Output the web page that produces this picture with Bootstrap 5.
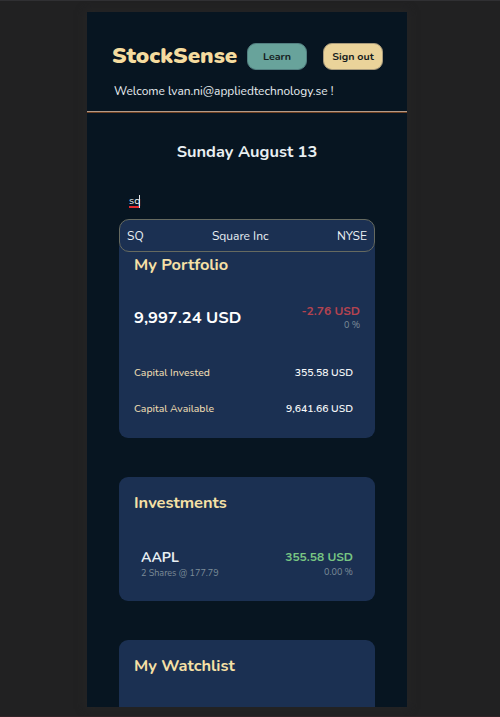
<!DOCTYPE html>
<html lang="en">
<head>
<meta charset="utf-8">
<meta name="viewport" content="width=device-width, initial-scale=1">
<title>StockSense</title>
<link rel="stylesheet" href="https://cdn.jsdelivr.net/npm/bootstrap@5.3.0/dist/css/bootstrap.min.css">
<style>
body{background:#212122;font-family:Nunito,Lato,"Open Sans",sans-serif;color:#e9eff2;height:717px;overflow:hidden;border-top:1px solid #303033;border-bottom:1px solid #302327}
.phone{width:320px;height:695px;margin:11px 0 0 87px;background:#071521;box-shadow:0 0 8px 2px #252526}
.top-bar{height:101px;background:linear-gradient(#b39a88 50%,#6e3f20 50%) bottom/100% 2px no-repeat;padding:30px 24px 0 25px}
.brand{font-size:22.4px;font-weight:900;color:#f5dc9f;line-height:28px;width:135px}
.pill,.pill:hover{width:60px;height:27px;border-radius:9px;font-size:10.7px;font-weight:700;color:#151c20;padding:0;line-height:25px;border:1px solid #505665}
.pill-learn,.pill-learn:hover{background:#68a39b;border-color:#527f80}
.pill-out,.pill-out:hover{background:#ead39a;border-color:#a89a7b}
.welcome{font-size:11.95px;line-height:20px;padding:11px 0 0 2px}
.date{font-size:16.4px;font-weight:700;line-height:24px;margin-top:27px}
.search{height:32px;margin-top:21px;padding-left:10px;font-size:10.7px;line-height:32px}
.typed{text-decoration:underline dashed #e52b2f 2px;text-underline-offset:2px;text-decoration-skip-ink:none}
.caret{width:1px;height:13px;margin-left:-1px;background:#e6e6e6}
.results{height:33px;margin-top:2px;border:1px solid #666a60;border-radius:10px;background:#1b3052;font-size:12px;line-height:32px;padding:0 7px;z-index:2}
.panel{background:#1b3052;border-radius:9px;padding:14px 15px 0}
.panel h2{font-size:16.4px;line-height:24px;font-weight:700;color:#f6e0a6;margin:0}
.first{height:199px;margin-top:-13px}
.second{height:124px;margin-top:39px}
.third{height:67px;margin-top:39px;border-radius:9px 9px 0 0}
.balance{height:30px;margin-top:25px}
.total{font-size:16.5px;font-weight:700;line-height:24px;padding-top:2px;color:#fff}
.change{font-size:12px;font-weight:700;line-height:16px}
.note{font-size:9px;line-height:12px;color:#7d8d99}
.fund{font-size:10.4px;line-height:16px}
.fund-first{margin-top:33px}
.fund-next{margin-top:20px}
.fund span:first-child{color:#ead9b0;font-weight:500}
.fund span:last-child{font-weight:600;color:#f5f7f8}
.fund,.holding{padding-right:7px}
.holding{margin-top:34px;padding-left:7px}
.ticker{font-size:14px;font-weight:700;line-height:18px}
.gain{line-height:17px}
.loss{color:#b44350}
.gain{color:#78c583}
</style>
</head>
<body>
<main class="phone overflow-hidden">
  <header class="top-bar">
    <div class="d-flex align-items-center">
      <div class="brand text-nowrap">StockSense</div>
      <button class="btn pill pill-learn">Learn</button>
      <button class="btn pill pill-out ms-3">Sign out</button>
    </div>
    <div class="welcome text-nowrap">Welcome lvan.ni@appliedtechnology.se !</div>
  </header>
  <div class="px-4 mx-2">
    <div class="date text-center">Sunday August 13</div>
    <div class="search d-flex align-items-center"><span class="typed">sq</span><i class="caret"></i></div>
    <div class="results position-relative d-flex justify-content-between"><span>SQ</span><span>Square Inc</span><span>NYSE</span></div>
    <section class="panel first">
      <h2>My Portfolio</h2>
      <div class="balance d-flex justify-content-between align-items-center">
        <div class="total">9,997.24 USD</div>
        <div class="text-end"><div class="change loss">-2.76 USD</div><div class="note">0 %</div></div>
      </div>
      <div class="fund fund-first d-flex justify-content-between"><span>Capital Invested</span><span>355.58 USD</span></div>
      <div class="fund fund-next d-flex justify-content-between"><span>Capital Available</span><span>9,641.66 USD</span></div>
    </section>
    <section class="panel second">
      <h2>Investments</h2>
      <div class="holding d-flex justify-content-between">
        <div><div class="ticker">AAPL</div><div class="note">2 Shares @ 177.79</div></div>
        <div class="text-end"><div class="change gain">355.58 USD</div><div class="note">0.00 %</div></div>
      </div>
    </section>
    <section class="panel third"><h2>My Watchlist</h2></section>
  </div>
</main>
<script src="https://cdn.jsdelivr.net/npm/bootstrap@5.3.0/dist/js/bootstrap.bundle.min.js"></script>
</body>
</html>
